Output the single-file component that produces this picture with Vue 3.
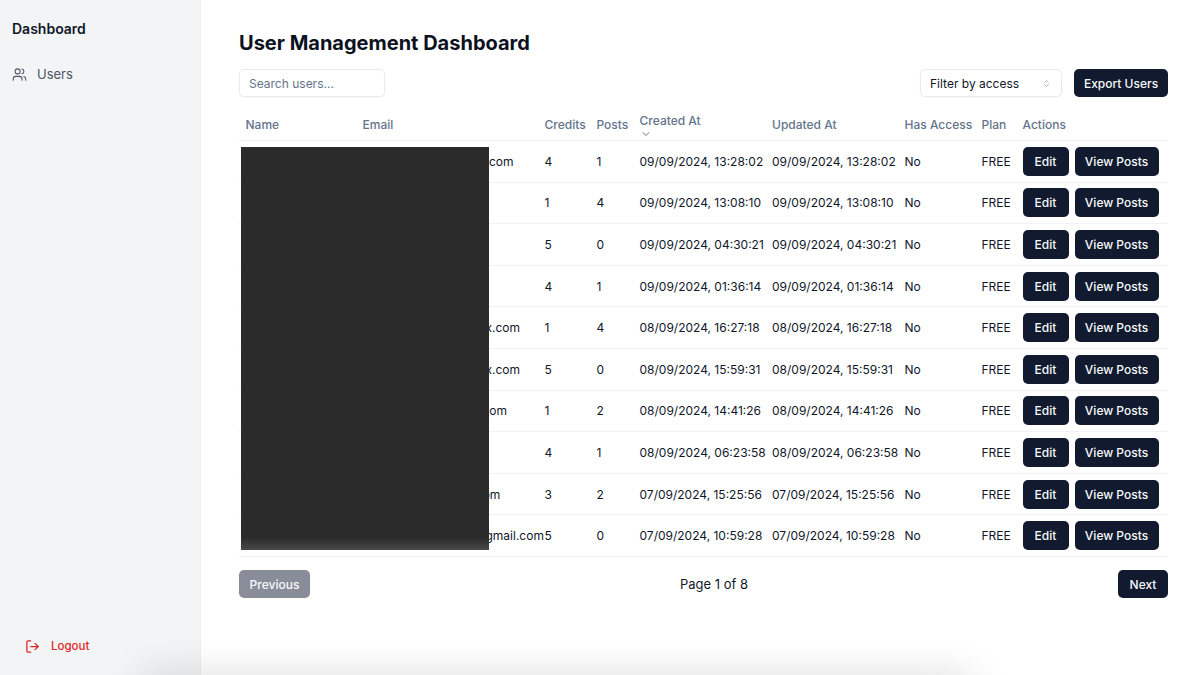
<template>
  <div class="layout">
    <aside class="sidebar">
      <div class="brand">Dashboard</div>
      <a class="nav-item">
        <svg class="nav-icon" viewBox="0 0 24 24" fill="none" stroke="currentColor" stroke-width="2" stroke-linecap="round" stroke-linejoin="round">
          <path d="M16 21v-2a4 4 0 0 0-4-4H6a4 4 0 0 0-4 4v2" />
          <circle cx="9" cy="7" r="4" />
          <path d="M22 21v-2a4 4 0 0 0-3-3.87" />
          <path d="M16 3.13a4 4 0 0 1 0 7.75" />
        </svg>
        <span>Users</span>
      </a>
      <a class="logout">
        <svg class="logout-icon" viewBox="0 0 24 24" fill="none" stroke="currentColor" stroke-width="2" stroke-linecap="round" stroke-linejoin="round">
          <path d="M9 21H5a2 2 0 0 1-2-2V5a2 2 0 0 1 2-2h4" />
          <polyline points="16 17 21 12 16 7" />
          <line x1="21" y1="12" x2="9" y2="12" />
        </svg>
        <span>Logout</span>
      </a>
    </aside>

    <main class="content">
      <h1>User Management Dashboard</h1>

      <div class="toolbar">
        <input class="search" placeholder="Search users..." />
        <div class="toolbar-right">
          <div class="select">
            <span>Filter by access</span>
            <svg viewBox="0 0 24 24" fill="none" stroke="currentColor" stroke-width="2" stroke-linecap="round" stroke-linejoin="round">
              <path d="m7 15 5 5 5-5" />
              <path d="m7 9 5-5 5 5" />
            </svg>
          </div>
          <button class="btn export">Export Users</button>
        </div>
      </div>

      <div class="table">
        <div class="row head">
          <div>Name</div>
          <div>Email</div>
          <div>Credits</div>
          <div>Posts</div>
          <div class="sorted">
            <span>Created At</span>
            <svg viewBox="0 0 24 24" fill="none" stroke="currentColor" stroke-width="2" stroke-linecap="round" stroke-linejoin="round">
              <path d="m6 9 6 6 6-6" />
            </svg>
          </div>
          <div>Updated At</div>
          <div>Has Access</div>
          <div>Plan</div>
          <div>Actions</div>
        </div>
        <div v-for="user in users" :key="user.created" class="row">
          <div></div>
          <div class="email">{{ user.email }}</div>
          <div>{{ user.credits }}</div>
          <div>{{ user.posts }}</div>
          <div>{{ user.created }}</div>
          <div>{{ user.created }}</div>
          <div>No</div>
          <div>FREE</div>
          <div class="actions">
            <button class="btn edit">Edit</button>
            <button class="btn posts">View Posts</button>
          </div>
        </div>
        <div class="redacted"></div>
      </div>

      <div class="pager">
        <button class="btn prev">Previous</button>
        <span>Page 1 of 8</span>
        <button class="btn next">Next</button>
      </div>

      <div class="bottom-shadow"></div>
    </main>
  </div>
</template>

<script setup>
const users = [
  { email: 'xxxxxxxxxxxx@xxxxx.com', credits: 4, posts: 1, created: '09/09/2024, 13:28:02' },
  { email: 'xxxxxx@xxxxx.com', credits: 1, posts: 4, created: '09/09/2024, 13:08:10' },
  { email: 'xxxxxx@xxxxx.com', credits: 5, posts: 0, created: '09/09/2024, 04:30:21' },
  { email: 'xxxxxx@xxxxx.com', credits: 4, posts: 1, created: '09/09/2024, 01:36:14' },
  { email: 'xxxxxxxxxxxxx@xxxxx.com', credits: 1, posts: 4, created: '08/09/2024, 16:27:18' },
  { email: 'xxxxxxxxxxxxx@xxxxx.com', credits: 5, posts: 0, created: '08/09/2024, 15:59:31' },
  { email: 'xxxxxxxxxxx@xxxxx.com', credits: 1, posts: 2, created: '08/09/2024, 14:41:26' },
  { email: 'xxxxxx@xxxxx.com', credits: 4, posts: 1, created: '08/09/2024, 06:23:58' },
  { email: 'xxxxxxxxxx@xxxxx.com', credits: 3, posts: 2, created: '07/09/2024, 15:25:56' },
  { email: 'xxxxxxxxxxxxxxxxx@gmail.com', credits: 5, posts: 0, created: '07/09/2024, 10:59:28' }
]
</script>

<style>
html, body {
  margin: 0;
  background: #fff;
}
</style>

<style scoped>
.layout {
  display: flex;
  height: 675px;
  overflow: hidden;
  font-family: Inter, "Liberation Sans", sans-serif;
  color: #0f172a;
  font-size: 12px;
}
.sidebar {
  width: 201px;
  flex: none;
  box-sizing: border-box;
  display: flex;
  flex-direction: column;
  background: #f3f4f6;
  border-right: 1px solid #eff0f2;
  padding: 20px 12px 20px;
}
.brand {
  font-size: 14px;
  font-weight: 600;
  line-height: 18px;
  color: #111827;
}
.nav-item {
  display: flex;
  align-items: center;
  gap: 10px;
  margin-top: 27px;
  color: #4b5563;
  font-size: 13px;
  line-height: 18px;
}
.nav-icon {
  width: 15px;
  height: 15px;
  stroke-width: 1.7;
}
.logout {
  display: flex;
  align-items: center;
  gap: 11px;
  margin-top: auto;
  margin-left: 13px;
  color: #dc2626;
  font-size: 11.5px;
  font-weight: 500;
  line-height: 18px;
}
.logout-icon {
  width: 15px;
  height: 15px;
}
.content {
  flex: 1;
  position: relative;
  box-sizing: border-box;
  padding: 31px 32px 0 38px;
  min-width: 0;
}
h1 {
  margin: 0 0 14px;
  font-size: 20px;
  line-height: 24px;
  font-weight: 700;
  color: #0b1120;
}
.toolbar {
  display: flex;
  justify-content: space-between;
  margin-bottom: 12px;
}
.toolbar-right {
  display: flex;
  gap: 12px;
}
.search {
  width: 146px;
  height: 28px;
  box-sizing: border-box;
  padding: 0 9px;
  border: 1px solid #e8eaef;
  border-radius: 5px;
  background: #fff;
  box-shadow: 0 1px 2px rgba(0, 0, 0, 0.03);
  font: 12px Inter, "Liberation Sans", sans-serif;
}
.search::placeholder {
  color: #64748b;
  opacity: 1;
}
.select {
  width: 142px;
  height: 28px;
  box-sizing: border-box;
  display: flex;
  align-items: center;
  justify-content: space-between;
  padding: 0 10px 0 9px;
  border: 1px solid #e8eaef;
  border-radius: 5px;
  box-shadow: 0 1px 2px rgba(0, 0, 0, 0.03);
}
.select svg {
  width: 9px;
  height: 9px;
  color: #9aa1ad;
}
.btn {
  border: 0;
  border-radius: 5px;
  background: #111a2e;
  color: #f8fafc;
  font: 500 12px Inter, "Liberation Sans", sans-serif;
  padding: 0;
}
.export {
  width: 94px;
  height: 28px;
}
.table {
  position: relative;
}
.row {
  display: grid;
  grid-template-columns: 117px 182px 52px 43px 132.5px 132.5px 77px 41px 1fr;
  align-items: center;
  height: 41.6px;
  box-sizing: border-box;
  border-bottom: 1px solid #f1f2f5;
}
.row:last-of-type {
  border-bottom: 0;
}
.row > div {
  padding-left: 6.5px;
  white-space: nowrap;
}
.head {
  height: 32px;
  color: #64748b;
  font-weight: 500;
}
.sorted {
  display: flex;
  flex-direction: column;
  margin-top: -1px;
}
.sorted span {
  line-height: 14px;
}
.sorted svg {
  width: 12px;
  height: 12px;
  margin-bottom: -5px;
}
.actions {
  display: flex;
  gap: 6px;
}
.edit {
  width: 46px;
  height: 29px;
}
.posts {
  width: 84px;
  height: 29px;
}
.redacted {
  position: absolute;
  left: 2px;
  top: 38px;
  width: 248px;
  height: 403px;
  background: linear-gradient(#2b2b2b 97%, #4a4a4a);
}
.pager {
  display: flex;
  align-items: center;
  justify-content: space-between;
  margin-top: 13px;
  font-size: 13px;
  color: #111827;
}
.prev {
  width: 71px;
  height: 28.5px;
  background: #888d99;
}
.next {
  width: 50px;
  height: 28.5px;
}
.bottom-shadow {
  position: absolute;
  left: -60px;
  width: 830px;
  top: 680px;
  height: 20px;
  box-shadow: 0 0 40px rgba(0, 0, 0, 0.22);
}
</style>
